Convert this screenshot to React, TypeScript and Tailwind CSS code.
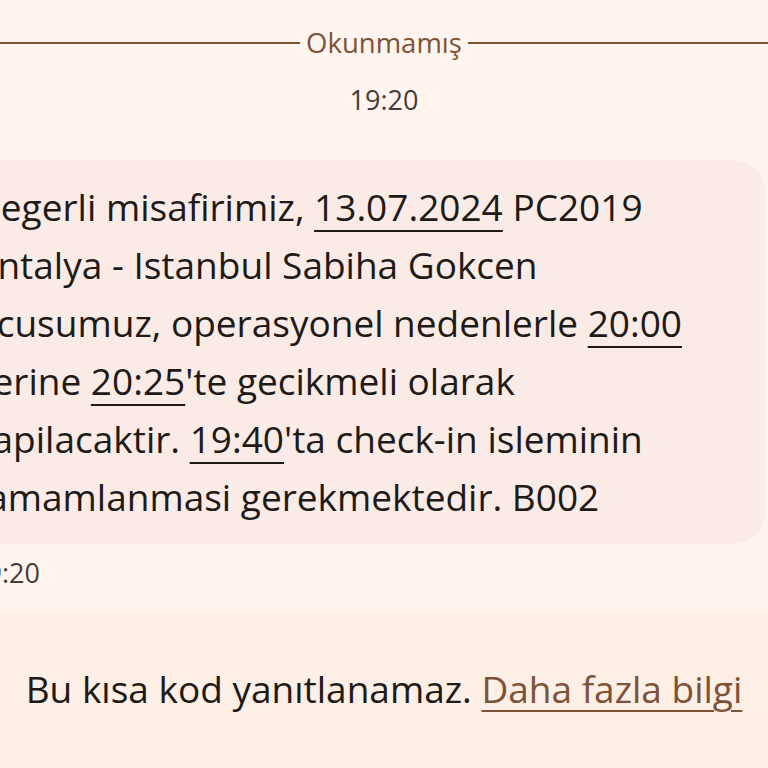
export default function App() {
  const u = "underline decoration-2 underline-offset-[9px]";
  return (
    <div
      className="flex h-[768px] w-[768px] flex-col overflow-hidden bg-[#fff5ee] text-[#201a17]"
      style={{ fontFamily: "'Open Sans', 'Noto Sans', sans-serif" }}
    >
      <div className="mt-[25px] flex items-center gap-[6px]">
        <div className="h-[2px] flex-1 bg-[#7d5237]" />
        <span className="text-[27.5px] leading-[36px] text-[#7d5237]">Okunmamış</span>
        <div className="h-[2px] flex-1 bg-[#7d5237]" />
      </div>

      <div className="mt-[21px] text-center text-[27px] leading-[36px] text-[#443c38]">19:20</div>

      <div className="mr-[3px] ml-[-50px] mt-[42px] rounded-[32px] bg-[#faebe6] px-6 pt-[18px] pb-[18px] text-[37px] leading-[58px]">
        Degerli misafirimiz, <span className={u}>13.07.2024</span> PC2019
        <br />
        Antalya - Istanbul Sabiha Gokcen
        <br />
        ucusumuz, operasyonel nedenlerle <span className={u}>20:00</span>
        <br />
        yerine <span className={u}>20:25</span>'te gecikmeli olarak
        <br />
        yapilacaktir. <span className={u}>19:40</span>'ta check-in isleminin
        <br />
        tamamlanmasi gerekmektedir. B002
      </div>

      <div className="ml-[-29px] mt-[11px] text-[27px] leading-[36px] text-[#443c38]">19:20</div>

      <div className="mt-[20px] flex flex-1 items-start justify-center bg-[#fdeee6] pt-[56px]">
        <p className="text-[37px] leading-[44px]">
          Bu kısa kod yanıtlanamaz.{" "}
          <span className="text-[#7d5237] underline decoration-2 underline-offset-[7px]">Daha fazla bilgi</span>
        </p>
      </div>
    </div>
  );
}
